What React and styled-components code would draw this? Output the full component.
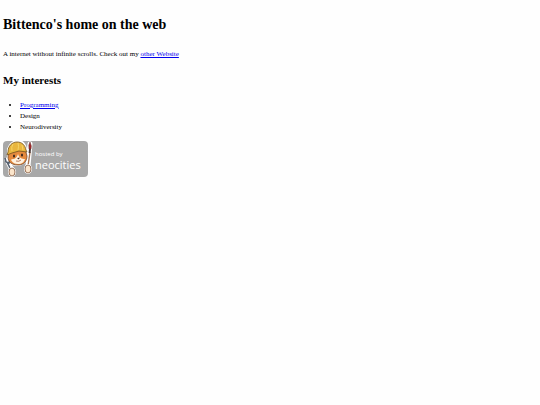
import React from 'react';
import styled, { createGlobalStyle } from 'styled-components';

const interests = [
  { name: 'Programming', href: '#programming' },
  { name: 'Design' },
  { name: 'Neurodiversity' },
];

const App = () => {
  return (
    <>
      <GlobalStyle />
      <Page>
        <Title>Bittenco's home on the web</Title>
        <Intro>
          A internet without infinite scrolls. Check out my <TextLink href="#other">other Website</TextLink>
        </Intro>
        <SubTitle>My interests</SubTitle>
        <InterestList>
          {interests.map(({ name, href }) => (
            <li key={name}>{href ? <TextLink href={href}>{name}</TextLink> : name}</li>
          ))}
        </InterestList>
        <BadgeLink href="#neocities">
          <NeocitiesBadge />
        </BadgeLink>
      </Page>
    </>
  );
};

const NeocitiesBadge = () => (
  <Badge viewBox="0 0 85 37">
    <rect x="0" y="0" width="85" height="36" rx="4" fill="#a8a8a8" />
    {/* white outline behind the mascot */}
    <path d="M4 19l5 10M27 3l-2 22" stroke="#fff" strokeWidth="5" strokeLinecap="round" />
    <path
      d="M5 8C7 3 10 0 15 0c4 0 7 3 8 8l1 8c-1 5-5 8-10 8S5 21 5 16z"
      fill="#fff"
      stroke="#fff"
      strokeWidth="2"
    />
    {/* wrench */}
    <path d="M2 17l1 4 3 1 1-4M4 21l4 8" fill="none" stroke="#56606e" strokeWidth="1.6" />
    {/* brush */}
    <path d="M27 11l-2 14" stroke="#a9744f" strokeWidth="1.4" />
    <path d="M27 8l-.4 4" stroke="#4a3a38" strokeWidth="2" />
    <path d="M27 1q2 4 1 7h-2q-1-4 1-7z" fill="#ac2929" stroke="#54282a" strokeWidth=".5" />
    {/* cat head */}
    <path
      d="M6 10l-1 6c0 5 4 8 10 8s9-4 9-9l-2-7z"
      fill="#e58a3d"
      stroke="#71462b"
      strokeWidth=".8"
    />
    <path d="M15 13q-1 4-4 5-3 0-3 1c2 3 4 4 7 4 4 0 6-2 7-5-3 0-6-1-7-5z" fill="#fff2df" />
    <ellipse cx="11" cy="15" rx="1" ry="1.6" fill="#38261f" />
    <ellipse cx="19" cy="14" rx="1" ry="1.6" fill="#38261f" />
    <path d="M14 17l3-.4-1.3 1.9z" fill="#4b2720" />
    <path d="M13 20q3 1 5-1" fill="none" stroke="#a85a3b" strokeWidth=".8" />
    {/* hard hat */}
    <path
      d="M5 11C5 5 9 1 14 1c5 0 8 3 9 8l1 2-8-1-7 2-5 2z"
      fill="#e9b63e"
      stroke="#72501f"
      strokeWidth=".8"
    />
    <path d="M10 3q-2 3-1 7M15 2q1 3 0 7M19 4l1 5" fill="none" stroke="#f7d467" strokeWidth="1" />
    {/* paws */}
    <ellipse cx="9" cy="31" rx="4" ry="5" fill="#fff" />
    <ellipse cx="9" cy="31" rx="3" ry="4" fill="#fbe5cb" stroke="#80563b" strokeWidth=".8" />
    <ellipse cx="25" cy="28" rx="4" ry="5" fill="#fff" />
    <ellipse cx="25" cy="28" rx="3" ry="4" fill="#fbe5cb" stroke="#80563b" strokeWidth=".8" />
    <BadgeText x="32" y="15" $size={6}>
      hosted by
    </BadgeText>
    <BadgeText x="32" y="28" $size={11}>
      neocities
    </BadgeText>
  </Badge>
);

const GlobalStyle = createGlobalStyle`
  body {
    margin: 0;
    background: #fefefe;
    color: #000;
    font-family: 'Liberation Serif', serif;
    font-size: 7px;
    line-height: 11px;
  }
`;

const Page = styled.main`
  padding: 13px 3px;
`;

const Title = styled.h1`
  margin: 0 0 12px;
  font-size: 14px;
  line-height: 24px;
`;

const Intro = styled.p`
  margin: 0 0 12px;
`;

const SubTitle = styled.h2`
  margin: 0 0 12px;
  font-size: 11px;
  line-height: 16px;
`;

const InterestList = styled.ul`
  margin: 0 0 8px;
  padding-left: 17px;
`;

const TextLink = styled.a`
  color: #0000ee;
`;

const BadgeLink = styled.a`
  display: inline-block;
`;

const Badge = styled.svg`
  display: block;
  width: 85px;
  height: 37px;
`;

const BadgeText = styled.text`
  fill: #fff;
  font-family: 'Open Sans', sans-serif;
  font-size: ${(props) => props.$size}px;
`;

export default App;
